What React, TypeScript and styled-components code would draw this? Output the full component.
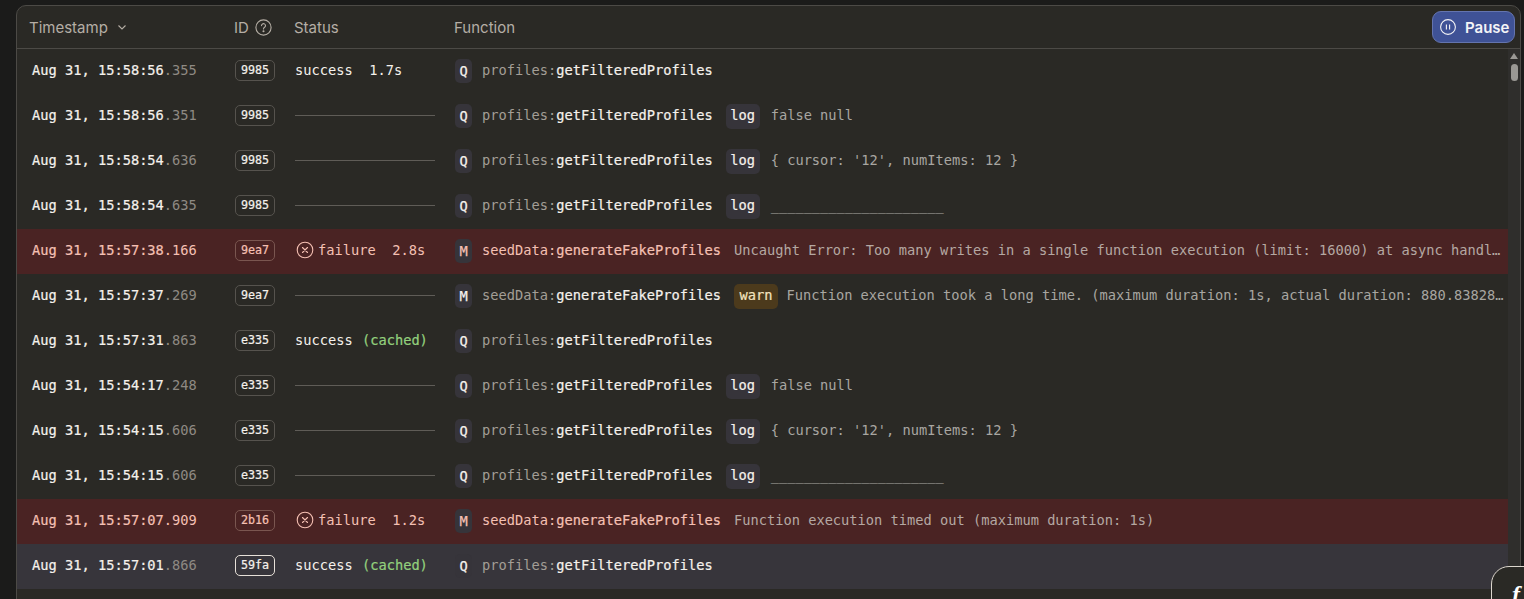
import React from "react";
import styled, { createGlobalStyle } from "styled-components";

const Global = createGlobalStyle`
  html, body { margin: 0; padding: 0; height: 100%; background: #1b1b1a; overflow: hidden; }
  #root { height: 100%; }
`;

const Page = styled.div`
  position: relative;
  height: 599px;
  padding: 5px 3px 0 16px;
  box-sizing: border-box;
  overflow: hidden;
`;

const Panel = styled.section`
  display: flex;
  flex-direction: column;
  height: 640px;
  background: #2a2925;
  border: 1px solid #4c4a46;
  border-radius: 10px;
  box-sizing: border-box;
`;

const Header = styled.header`
  position: relative;
  display: flex;
  align-items: center;
  height: 42px;
  flex: none;
  border-bottom: 1px solid #4c4a46;
  font-family: Inter, sans-serif;
  font-size: 15px;
  color: #b5aea5;
  box-sizing: content-box;
`;

const HeadCell = styled.div<{ $w: number; $pl?: number }>`
  display: flex;
  align-items: center;
  gap: 8px;
  width: ${(p) => p.$w}px;
  padding-left: ${(p) => p.$pl ?? 0}px;
  box-sizing: border-box;
  flex: none;
`;

const HelpIcon = styled.svg`
  margin-left: -2px;
`;

const PauseButton = styled.button`
  position: absolute;
  right: 5px;
  top: 5px;
  display: flex;
  align-items: center;
  gap: 9px;
  width: 83px;
  height: 32px;
  padding: 0 0 0 7px;
  box-sizing: border-box;
  background: #3f5296;
  border: 1px solid #6474ae;
  border-radius: 9px;
  color: #f4f4f6;
  font-family: Inter, sans-serif;
  font-size: 15px;
  font-weight: 600;
`;

const Body = styled.div`
  display: flex;
  flex: 1;
  min-height: 0;
`;

const Rows = styled.div`
  flex: 1;
  min-width: 0;
`;

const ScrollTrack = styled.div`
  width: 12px;
  flex: none;
  background: #2f2e2c;
`;

const ScrollArrow = styled.div`
  margin: 4px auto 0;
  width: 0;
  height: 0;
  border-left: 4px solid transparent;
  border-right: 4px solid transparent;
  border-bottom: 6px solid #9a9894;
`;

const ScrollThumb = styled.div`
  margin: 5px auto 0;
  width: 7px;
  height: 17px;
  border-radius: 4px;
  background: #9a9894;
`;

type Tone = "plain" | "fail" | "selected";

const Row = styled.div<{ $tone: Tone }>`
  display: flex;
  align-items: center;
  height: 45px;
  padding-bottom: 3px;
  box-sizing: border-box;
  font-family: "DejaVu Sans Mono", monospace;
  font-size: 13.7px;
  background: ${(p) => (p.$tone === "fail" ? "#4a2323" : p.$tone === "selected" ? "#37353b" : "transparent")};
  color: ${(p) => (p.$tone === "fail" ? "#f5c0b3" : "#f5f1ec")};
`;

const Time = styled.div`
  width: 218px;
  padding-left: 15px;
  box-sizing: border-box;
  flex: none;
  white-space: pre;
  -webkit-text-stroke: 0.2px currentColor;
`;

const Millis = styled.span<{ $fail: boolean }>`
  color: ${(p) => (p.$fail ? "inherit" : "#8f8a83")};
  -webkit-text-stroke: 0;
`;

const IdCell = styled.div`
  width: 60px;
  flex: none;
`;

const IdBadge = styled.span<{ $tone: Tone }>`
  display: flex;
  align-items: center;
  justify-content: center;
  width: 40px;
  height: 21px;
  box-sizing: border-box;
  font-size: 11.7px;
  -webkit-text-stroke: 0.2px currentColor;
  border-radius: 5px;
  border: 1px solid
    ${(p) => (p.$tone === "fail" ? "#7a5650" : p.$tone === "selected" ? "#e6e0d8" : "#56534e")};
`;

const StatusCell = styled.div`
  display: flex;
  align-items: center;
  width: 160px;
  flex: none;
  white-space: pre;
`;

const Rule = styled.div`
  width: 140px;
  height: 1px;
  background: #5f5c57;
`;

const FailIcon = styled.svg`
  width: 18px;
  height: 18px;
  margin: 0 4px 0 1px;
  flex: none;
`;

const Cached = styled.span`
  margin-left: 1px;
  color: #93d07d;
  -webkit-text-stroke: 0.2px currentColor;
`;

const FnCell = styled.div`
  display: flex;
  align-items: center;
  flex: 1;
  min-width: 0;
`;

const Chip = styled.span`
  display: flex;
  align-items: center;
  justify-content: center;
  flex: none;
  width: 17px;
  height: 24px;
  margin: 2px 10px 0 0;
  border-radius: 5px;
  -webkit-text-stroke: 0.25px currentColor;
  background: #36343a;
`;

const FnName = styled.span<{ $fail: boolean }>`
  flex: none;
  color: ${(p) => (p.$fail ? "inherit" : "#a39e96")};
  margin-right: 13px;
`;

const FnStrong = styled.span<{ $fail: boolean }>`
  color: ${(p) => (p.$fail ? "inherit" : "#f5f1ec")};
  -webkit-text-stroke: 0.2px currentColor;
`;

const Level = styled.span<{ $warn?: boolean }>`
  display: flex;
  align-items: center;
  flex: none;
  height: 25px;
  box-sizing: border-box;
  padding: 0 ${(p) => (p.$warn ? 5.5 : 4.6)}px 2px;
  margin: 2px ${(p) => (p.$warn ? 8.5 : 11)}px 0 0;
  border-radius: 5px;
  -webkit-text-stroke: 0.2px currentColor;
  background: ${(p) => (p.$warn ? "#4c3a1c" : "#36343a")};
  color: ${(p) => (p.$warn ? "#f3e2bf" : "#f5f1ec")};
`;

const Message = styled.span<{ $fail: boolean }>`
  flex: none;
  white-space: pre;
  color: ${(p) => (p.$fail ? "#b5a8a2" : "#a8a6a1")};
`;

const Floating = styled.div`
  position: absolute;
  left: 1491px;
  top: 566px;
  width: 80px;
  height: 80px;
  border: 1px solid #dcd6cd;
  border-radius: 18px;
  background: #2a2925;
  color: #ffffff;
  font-family: "Liberation Serif", serif;
  font-style: italic;
  font-weight: 700;
  font-size: 24px;
  padding: 14px 0 0 20px;
  box-sizing: border-box;
`;

type Log = {
  time: string;
  ms: string;
  id: string;
  tone?: Tone;
  status?: React.ReactNode;
  kind: "Q" | "M";
  level?: "log" | "warn";
  msg?: string;
};

const prof = "getFilteredProfiles";
const blank = "_____________________";

const logs: Log[] = [
  { time: "Aug 31, 15:58:56", ms: ".355", id: "9985", status: "success  1.7s", kind: "Q" },
  { time: "Aug 31, 15:58:56", ms: ".351", id: "9985", kind: "Q", level: "log", msg: "false null" },
  { time: "Aug 31, 15:58:54", ms: ".636", id: "9985", kind: "Q", level: "log", msg: "{ cursor: '12', numItems: 12 }" },
  { time: "Aug 31, 15:58:54", ms: ".635", id: "9985", kind: "Q", level: "log", msg: blank },
  { time: "Aug 31, 15:57:38", ms: ".166", id: "9ea7", tone: "fail", status: "failure  2.8s", kind: "M", msg: "Uncaught Error: Too many writes in a single function execution (limit: 16000) at async handl…" },
  { time: "Aug 31, 15:57:37", ms: ".269", id: "9ea7", kind: "M", level: "warn", msg: "Function execution took a long time. (maximum duration: 1s, actual duration: 880.83828…" },
  { time: "Aug 31, 15:57:31", ms: ".863", id: "e335", status: "cached", kind: "Q" },
  { time: "Aug 31, 15:54:17", ms: ".248", id: "e335", kind: "Q", level: "log", msg: "false null" },
  { time: "Aug 31, 15:54:15", ms: ".606", id: "e335", kind: "Q", level: "log", msg: "{ cursor: '12', numItems: 12 }" },
  { time: "Aug 31, 15:54:15", ms: ".606", id: "e335", kind: "Q", level: "log", msg: blank },
  { time: "Aug 31, 15:57:07", ms: ".909", id: "2b16", tone: "fail", status: "failure  1.2s", kind: "M", msg: "Function execution timed out (maximum duration: 1s)" },
  { time: "Aug 31, 15:57:01", ms: ".866", id: "59fa", tone: "selected", status: "cached", kind: "Q" },
];

function renderStatus(log: Log) {
  if (log.status === "cached") {
    return (
      <>
        success <Cached>(cached)</Cached>
      </>
    );
  }
  if (log.tone === "fail") {
    return (
      <>
        <FailIcon viewBox="0 0 18 18" fill="none" stroke="currentColor" strokeWidth="1.1">
          <circle cx="9" cy="9" r="7.8" />
          <path d="M6.5 6.5l5 5M11.5 6.5l-5 5" strokeLinecap="round" />
        </FailIcon>
        {log.status}
      </>
    );
  }
  return log.status ?? <Rule />;
}

export default function App() {
  return (
    <>
      <Global />
      <Page>
        <Panel>
          <Header>
            <HeadCell $w={217} $pl={12}>
              Timestamp
              <svg width="12" height="12" viewBox="0 0 12 12" fill="none" stroke="currentColor" strokeWidth="1.1">
                <path d="M2.5 4.5L6 8l3.5-3.5" />
              </svg>
            </HeadCell>
            <HeadCell $w={60}>
              ID
              <HelpIcon width="17" height="17" viewBox="0 0 17 17" fill="none" stroke="currentColor" strokeWidth="1.1">
                <circle cx="8.5" cy="8.5" r="7.6" />
                <path d="M6.5 6.6a2 2 0 1 1 3.1 1.7c-.7.5-1.1.9-1.1 1.7" strokeLinecap="round" />
                <circle cx="8.5" cy="12.3" r=".5" fill="currentColor" />
              </HelpIcon>
            </HeadCell>
            <HeadCell $w={160}>Status</HeadCell>
            <HeadCell $w={200}>Function</HeadCell>
            <PauseButton type="button">
              <svg width="16" height="16" viewBox="0 0 16 16" fill="none" stroke="currentColor" strokeWidth="1.1">
                <circle cx="8" cy="8" r="7.4" />
                <path d="M6.4 5.4v5.2M9.6 5.4v5.2" />
              </svg>
              Pause
            </PauseButton>
          </Header>
          <Body>
            <Rows>
              {logs.map((log, i) => {
                const tone = log.tone ?? "plain";
                const fail = tone === "fail";
                return (
                  <Row key={i} $tone={tone}>
                    <Time>
                      {log.time}
                      <Millis $fail={fail}>{log.ms}</Millis>
                    </Time>
                    <IdCell>
                      <IdBadge $tone={tone}>{log.id}</IdBadge>
                    </IdCell>
                    <StatusCell>{renderStatus(log)}</StatusCell>
                    <FnCell>
                      <Chip>{log.kind}</Chip>
                      <FnName $fail={fail}>
                        {log.kind === "Q" ? "profiles:" : "seedData:"}
                        <FnStrong $fail={fail}>{log.kind === "Q" ? prof : "generateFakeProfiles"}</FnStrong>
                      </FnName>
                      {log.level && <Level $warn={log.level === "warn"}>{log.level}</Level>}
                      {log.msg && <Message $fail={fail}>{log.msg}</Message>}
                    </FnCell>
                  </Row>
                );
              })}
            </Rows>
            <ScrollTrack>
              <ScrollArrow />
              <ScrollThumb />
            </ScrollTrack>
          </Body>
        </Panel>
        <Floating>f</Floating>
      </Page>
    </>
  );
}
